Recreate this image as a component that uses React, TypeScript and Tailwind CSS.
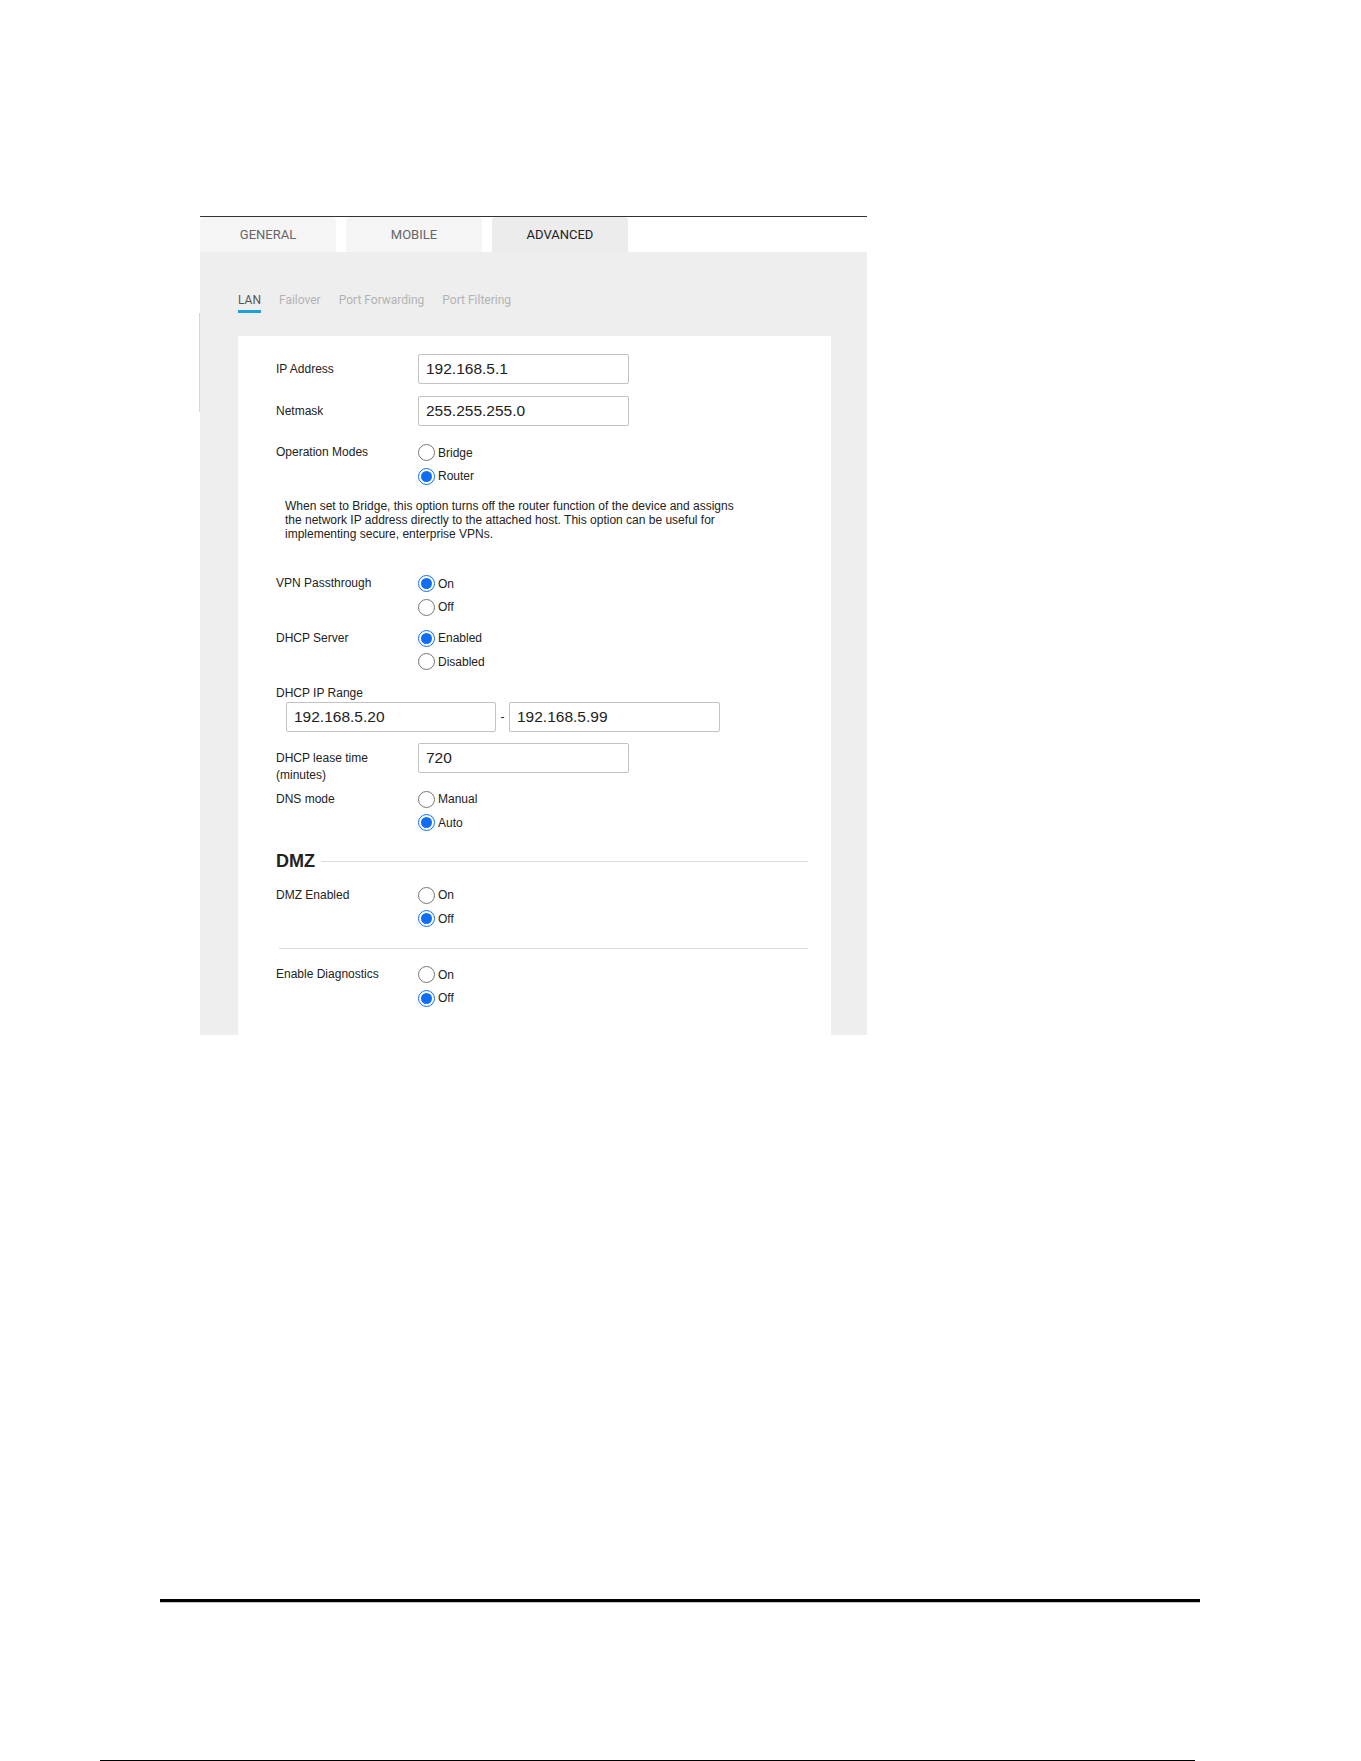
import React from 'react';

const sans = "font-['Liberation_Sans',Arial,sans-serif]";
const roboto = "font-['Roboto',Arial,sans-serif]";

type Opt = { label: string; checked?: boolean };

function Radio({ label, checked }: Opt) {
  return (
    <div className="flex h-[23.5px] items-center">
      <span
        className={`flex h-[17px] w-[17px] items-center justify-center rounded-full border bg-white ${
          checked ? 'border-[#0f6ef2]' : 'border-[#767676]'
        }`}
      >
        {checked && <span className="h-[11px] w-[11px] rounded-full bg-[#0f6ef2]" />}
      </span>
      <span className="ml-[3px] text-[12px] text-[#222]">{label}</span>
    </div>
  );
}

function RadioRow({ label, options, className = '' }: { label: string; options: Opt[]; className?: string }) {
  return (
    <div className={`flex ${className}`}>
      <div className="w-[142px] text-[12px] leading-[23.5px] text-[#222]">{label}</div>
      <div className="flex flex-col">
        {options.map((o) => (
          <Radio key={o.label} {...o} />
        ))}
      </div>
    </div>
  );
}

function TextBox({ value, className = '' }: { value: string; className?: string }) {
  return (
    <input
      readOnly
      value={value}
      className={`h-[30px] rounded-[2px] border border-[#c2c2c2] bg-white px-[7px] text-[15.5px] text-[#222] outline-none ${className}`}
    />
  );
}

function InputRow({ label, value, className = '' }: { label: string; value: string; className?: string }) {
  return (
    <div className={`flex items-center ${className}`}>
      <div className="w-[142px] text-[12px] text-[#222]">{label}</div>
      <TextBox value={value} className="w-[211px]" />
    </div>
  );
}

export default function App() {
  const tabs = [
    { name: 'GENERAL', active: false },
    { name: 'MOBILE', active: false },
    { name: 'ADVANCED', active: true },
  ];
  const subTabs = ['LAN', 'Failover', 'Port Forwarding', 'Port Filtering'];

  return (
    <div className={`relative h-[1761px] w-[1361px] overflow-hidden bg-white pt-[216px] ${sans}`}>
      <div className="ml-[200px] w-[667px]">
        <div className="h-px bg-[#333]" />

        {/* top level tabs */}
        <div className="flex h-[35px] gap-[10px]">
          {tabs.map((t) => (
            <div
              key={t.name}
              className={`flex w-[136px] items-center justify-center rounded-t-[4px] text-[13px] ${roboto} ${
                t.active ? 'bg-[#ececec] text-[#222]' : 'bg-[#f5f5f5] text-[#666]'
              }`}
            >
              {t.name}
            </div>
          ))}
        </div>

        <div className="relative bg-[#eeeeee] pl-[38px] pr-[36px] pt-[40px]">
          <div className="absolute left-[-1px] top-[61px] h-[99px] w-px bg-[#d6d6d6]" />

          {/* sub tabs */}
          <div className={`flex gap-[18px] text-[12px] ${roboto}`}>
            {subTabs.map((s, i) => (
              <div key={s} className="flex flex-col">
                <span className={`leading-[16px] ${i === 0 ? 'text-[#555]' : 'text-[#b3b3b3]'}`}>{s}</span>
                <span className={`mt-[2px] h-[3px] ${i === 0 ? 'bg-[#1ba1dc]' : 'bg-transparent'}`} />
              </div>
            ))}
          </div>

          {/* LAN settings card */}
          <div className="mt-[23px] flex flex-col bg-white pb-[25px] pl-[38px] pr-[23px] pt-[18px]">
            <InputRow label="IP Address" value="192.168.5.1" />
            <InputRow label="Netmask" value="255.255.255.0" className="mt-[12px]" />

            <RadioRow
              label="Operation Modes"
              className="mt-[14.75px]"
              options={[{ label: 'Bridge' }, { label: 'Router', checked: true }]}
            />
            <p className="mt-[11px] w-[469px] pl-[9px] text-[12px] leading-[14.25px] text-[#222]">
              When set to Bridge, this option turns off the router function of the device and assigns the network IP
              address directly to the attached host. This option can be useful for implementing secure, enterprise
              VPNs.
            </p>

            <RadioRow
              label="VPN Passthrough"
              className="mt-[30.5px]"
              options={[{ label: 'On', checked: true }, { label: 'Off' }]}
            />
            <RadioRow
              label="DHCP Server"
              className="mt-[7.7px]"
              options={[{ label: 'Enabled', checked: true }, { label: 'Disabled' }]}
            />

            <div className="mt-[11.75px] text-[12px] leading-[16px] text-[#222]">DHCP IP Range</div>
            <div className="mt-[0.3px] flex items-center pl-[10px]">
              <TextBox value="192.168.5.20" className="w-[210px]" />
              <span className="w-[13px] text-center text-[12px] text-[#222]">-</span>
              <TextBox value="192.168.5.99" className="w-[211px]" />
            </div>

            <div className="mt-[11.5px] flex items-start">
              <div className="w-[142px] pt-[6.5px] text-[12px] leading-[17px] text-[#222]">
                DHCP lease time
                <br />
                (minutes)
              </div>
              <TextBox value="720" className="w-[211px]" />
            </div>

            <RadioRow
              label="DNS mode"
              className="mt-[4px]"
              options={[{ label: 'Manual' }, { label: 'Auto', checked: true }]}
            />

            <div className="mt-[14.35px] flex h-[24px] items-center">
              <span className="text-[18px] font-bold text-[#222]">DMZ</span>
              <span className="ml-[6px] h-px flex-1 bg-[#dcdcdc]" />
            </div>

            <RadioRow
              label="DMZ Enabled"
              className="mt-[10.5px]"
              options={[{ label: 'On' }, { label: 'Off', checked: true }]}
            />

            <div className="ml-[2.5px] mt-[17px] h-px bg-[#dcdcdc]" />

            <RadioRow
              label="Enable Diagnostics"
              className="mt-[14.5px]"
              options={[{ label: 'On' }, { label: 'Off', checked: true }]}
            />
          </div>
        </div>
      </div>

      {/* page footer rule */}
      <div className="ml-[160px] mt-[564px] w-[1040px]">
        <div className="h-[3px] bg-black" />
        <div className="h-px bg-[#c8c8c8]" />
      </div>
      <div className="absolute bottom-0 left-[100px] h-px w-[1095px] bg-black" />
    </div>
  );
}
